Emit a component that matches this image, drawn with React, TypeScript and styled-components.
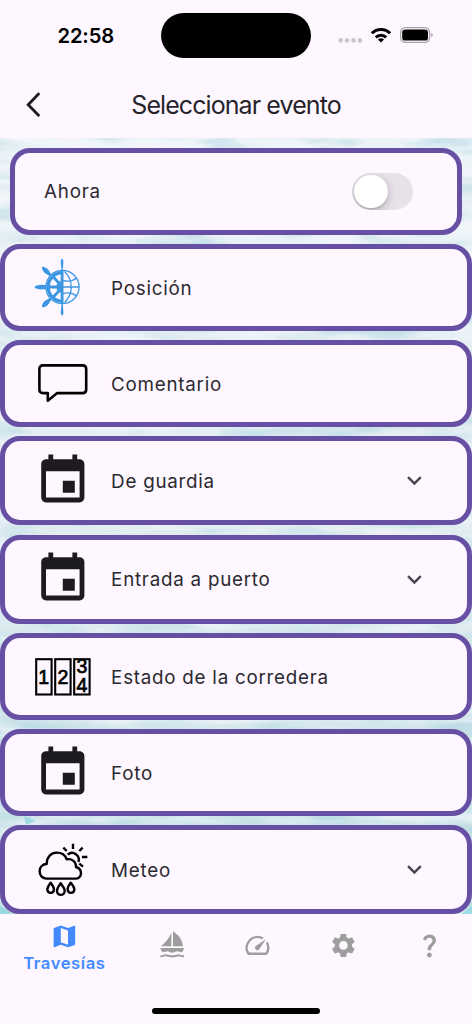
import React from "react";
import styled, { createGlobalStyle } from "styled-components";
import { MdEvent, MdExpandMore, MdMap, MdQuestionMark, MdSettings, MdSpeed } from "react-icons/md";

const GlobalStyle = createGlobalStyle`
  * { box-sizing: border-box; }
  body { margin: 0; background: #fef7ff; font-family: Inter, "Liberation Sans", sans-serif; }
`;

const Screen = styled.div`
  width: 472px;
  height: 1024px;
  display: flex;
  flex-direction: column;
  overflow: hidden;
  background: #fef7ff;
  color: #1d1b20;
`;

const StatusBar = styled.header`
  height: 71px;
  flex: none;
  display: grid;
  grid-template-columns: 161px 150px 161px;
  align-items: center;
`;

const Clock = styled.div`
  padding-left: 57.5px;
  font-size: 20.2px;
  font-weight: 600;
  letter-spacing: -0.15px;
  color: #000;
`;

const Island = styled.div`
  height: 44.5px;
  border-radius: 23px;
  background: #000;
`;

const Indicators = styled.div`
  display: flex;
  align-items: center;
  padding-left: 27px;
`;

const AppBar = styled.div`
  height: 67px;
  flex: none;
  display: grid;
  grid-template-columns: 68px 1fr 68px;
  align-items: center;
  justify-items: center;
`;

const Title = styled.h1`
  margin: 0;
  font-size: 25px;
  line-height: 32px;
  font-weight: 400;
  letter-spacing: -0.92px;
  white-space: nowrap;
  color: #26242a;
`;

const Content = styled.main`
  position: relative;
  height: 775.5px;
  flex: none;
  overflow: hidden;
`;

const Water = styled.svg`
  position: absolute;
  inset: 0;
`;

const List = styled.div`
  position: relative;
  display: flex;
  flex-direction: column;
  gap: 9.6px;
  padding-top: 10px;
`;

const Card = styled.div<{ $inset?: boolean; $tall?: boolean }>`
  flex: none;
  height: ${(p) => (p.$tall ? 88.9 : 86.5)}px;
  margin: 0 ${(p) => (p.$inset ? 9.6 : 0)}px;
  padding-left: ${(p) => (p.$inset ? 29.5 : 28.6)}px;
  padding-right: ${(p) => (p.$inset ? 44 : 38)}px;
  border: 5px solid #6750a4;
  border-radius: 20px;
  background: #fef7ff;
  display: flex;
  align-items: center;
`;

const IconSlot = styled.div`
  width: 58px;
  margin-right: 19.5px;
  flex: none;
  display: flex;
  justify-content: center;
  color: #1d1b20;
`;

const Label = styled.span`
  flex: 1;
  padding-top: 2.4px;
  font-size: 18.8px;
  line-height: 28px;
  letter-spacing: 0.75px;
  white-space: nowrap;
  color: #2b292f;
`;

const Chevron = styled(MdExpandMore)`
  width: 28.8px;
  height: 28.8px;
  color: #49454f;
`;

const Toggle = styled.div`
  width: 61px;
  height: 37.5px;
  padding: 2px;
  border-radius: 19px;
  background: #e8e1ea;
  overflow: hidden;
`;

const Knob = styled.div`
  width: 33.5px;
  height: 33.5px;
  border-radius: 50%;
  background: #fff;
  box-shadow: 0 3px 9px rgba(0, 0, 0, 0.24), 0 2px 1px rgba(0, 0, 0, 0.06);
`;

const NavBar = styled.nav`
  height: 63px;
  flex: none;
  display: flex;
`;

const NavItem = styled.div<{ $active?: boolean }>`
  flex: ${(p) => (p.$active ? 1.5 : 1)};
  display: flex;
  flex-direction: column;
  align-items: center;
  justify-content: ${(p) => (p.$active ? "flex-start" : "center")};
  padding-top: ${(p) => (p.$active ? 8.5 : 0)}px;
  color: ${(p) => (p.$active ? "#448aff" : "#9e9e9e")};
  font-size: 16.6px;
  line-height: 24px;
  font-weight: 600;
  letter-spacing: 0.6px;
`;

const HomeArea = styled.div`
  flex: 1;
  display: flex;
  justify-content: center;
  padding-top: 31.5px;
`;

const HomeBar = styled.div`
  width: 168px;
  height: 6px;
  border-radius: 3px;
  background: #000;
`;

const StatusIcons = () => (
  <svg width="98" height="30" viewBox="338 21 98 30">
    {[340.7, 347.1, 353.5, 359.9].map((x) => (
      <circle key={x} cx={x} cy="40.4" r="2.3" fill="#cbc5ce" />
    ))}
    <g fill="none" stroke="#000" strokeWidth="3">
      <path d="M371.8 33.2a13 13 0 0 1 18.4 0" />
      <path d="M375.8 37.4a7.4 7.4 0 0 1 10.4 0" />
    </g>
    <path d="M377.9 39.6a4.5 4.5 0 0 1 6.2 0L381 42.5z" />
    <rect x="400.6" y="27.6" width="29" height="14.8" rx="4.8" fill="none" stroke="#a7a2a9" strokeWidth="1.2" />
    <rect x="402.2" y="29.4" width="25.8" height="11.2" rx="3.2" />
    <path d="M431.2 32.7c2.2 1 2.2 3.4 0 4.4z" fill="#a7a2a9" />
  </svg>
);

const BackArrow = () => (
  <svg width="16" height="26" viewBox="0.7 0 16 26" fill="none" stroke="#1d1b20" strokeWidth="2.8">
    <path d="M13.2 2.1L2.9 12.7l10.3 10.6" strokeLinecap="round" />
  </svg>
);

const HelmIcon = () => (
  <svg width="58" height="58" viewBox="33.5 258 58 58" fill="none" stroke="#3b97e3" strokeWidth="1.4">
    <circle cx="62" cy="287" r="16.6" strokeWidth="1.3" />
    <path d="M62 272.7a14.3 14.3 0 0 0 0 28.6" strokeWidth="3.2" />
    <path d="M62 281a6 6 0 0 0 0 12z" fill="#3b97e3" strokeWidth="0.5" />
    <path d="M62 287H47M62 287l-10-11M62 287l-10 11M61.6 271v32" strokeWidth="2.8" />
    <path d="M62 287h16.5M64 271.5c9 8.5 9 22.5 0 31M62 280.5c6 1.5 11 0 14-2.5M62 293.5c6-1.5 11 0 14 2.5" strokeWidth="1.3" />
    <g fill="#3b97e3" stroke="none">
      <path d="M61.1 270l-.9-8c.2-2.1.7-3.3 1.5-3.3s1.1 1.200 1.200 3.300l-.6 8zM61.100 304l-.9 8c.2 2.100.7 3.500 1.500 3.500s1.100-1.400 1.200-3.500l-.6-8z" />
      <path d="M46 289.300h-3c-4 .5-8-.5-9.200-2.200 1.200-1.700 5.200-2.700 9.200-2.200h3z" />
      <path d="M49.400 276.200l-2.500-1.800c-3-.9-5.500-4.200-5.500-7.700 3.500-.1 6.800 2.400 7.800 5.400l1.800 2.400z" />
      <path d="M49.400 297.800l-2.500 1.800c-3 .9-5.500 4.200-5.500 7.700 3.500.1 6.800-2.400 7.800-5.400l1.800-2.400z" />
    </g>
  </svg>
);

const CommentIcon = () => (
  <svg width="50" height="38" viewBox="0 0 50 38" fill="none" stroke="#000" strokeWidth="2.6" strokeLinejoin="round">
    <path d="M5 1.400h39.500q3.700 0 3.700 3.700v20.300q0 3.700-3.700 3.700H19.200l-9.400 7.600V29.100H5q-3.600 0-3.600-3.700V5.100q0-3.700 3.600-3.700z" />
  </svg>
);

const Digit = styled.text`
  font-family: "Liberation Sans", Arial, sans-serif;
  font-size: 19.5px;
  font-weight: 400;
  stroke: #000;
  stroke-width: 0.7px;
  text-anchor: middle;
`;

const LogIcon = () => (
  <svg width="56" height="38" viewBox="0 0 56 38">
    <g fill="none" stroke="#000" strokeWidth="2.1">
      <rect x="1.200" y="1.200" width="15.400" height="35.300" />
      <rect x="20.200" y="1.200" width="15.400" height="35.300" />
      <rect x="39.200" y="1.200" width="15.400" height="35.300" />
    </g>
    <Digit x="8.700" y="26">1</Digit>
    <Digit x="28" y="26">2</Digit>
    <Digit x="47" y="15">3</Digit>
    <Digit x="47" y="34">4</Digit>
  </svg>
);

const WeatherIcon = () => (
  <svg width="52" height="55" viewBox="111 128 156 165" fill="none" stroke="#000" strokeWidth="7.200" strokeLinejoin="round">
    <path d="M139 238C125 236 119 226 119 215C119 203 128 194 140 194C140 173 153 160 170 160C185 160 196 168 200 180C216 177 229 188 228 203C238 206 243 213 243 221C243 231 236 238 226 238Z" />
    <path d="M203 166A20 20 0 0 1 235 188" />
    <path d="M219 133v16M190 145l10 10M248 145l-10 10M246 173h16M238 193l11 9" />
    <path d="M152 250C147 257 142 263 142 270C142 284 162 284 162 270C162 263 157 257 152 250ZM182 252C176 260 171 266 171 274C171 291 194 291 194 274C194 266 188 260 182 252ZM212 250C207 257 203 263 203 270C203 284 223 284 223 270C223 263 217 257 212 250Z" />
  </svg>
);

const BoatIcon = () => (
  <svg width="28" height="28.800" viewBox="473 394 84 86.400" fill="currentColor">
    <path d="M513 399v40.500h-31C496 428 507 414 513 399zM518 395c15 9 28 25 30 44.500h-30z" />
    <path d="M480 445h71c-1 6-3 10-7 13-8 0-9-3-14-3s-7 4-14 4-9-4-14-4-6 3-14 3c-4-3-7-7-8-13z" />
    <path d="M480 470q6 0 11-2t13 0 12 2 12-2 12 0 11 2" fill="none" stroke="currentColor" strokeWidth="6" />
  </svg>
);

const Sea = () => (
  <Water width="472" height="776" aria-hidden="true">
    <defs>
      <linearGradient id="sea" x1="0" y1="0" x2="0" y2="1">
        <stop offset="0" stopColor="#edf4f8" />
        <stop offset="0.45" stopColor="#e2edf2" />
        <stop offset="0.8" stopColor="#cfe5ea" />
        <stop offset="1" stopColor="#bcdde2" />
      </linearGradient>
      <filter id="waves" x="0" y="0" width="100%" height="100%" colorInterpolationFilters="sRGB">
        <feTurbulence type="fractalNoise" baseFrequency="0.011 0.07" numOctaves="3" seed="8" />
        <feColorMatrix values="0 0 0 0 0.96  0 0 0 0 0.97  0 0 0 0 0.99  3 0 0 0 -1.2" />
      </filter>
      <filter id="ripples" x="0" y="0" width="100%" height="100%" colorInterpolationFilters="sRGB">
        <feTurbulence type="fractalNoise" baseFrequency="0.014 0.06" numOctaves="3" seed="21" />
        <feColorMatrix values="0 0 0 0 0.7  0 0 0 0 0.84  0 0 0 0 0.88  3 0 0 0 -1.3" />
      </filter>
    </defs>
    <rect width="472" height="776" fill="url(#sea)" />
    <rect width="472" height="776" filter="url(#ripples)" opacity="0.6" />
    <rect width="472" height="776" filter="url(#waves)" opacity="0.65" />
    <path d="M0 776v-8l6 3 5 5zM461 776l11-8v8zM24 678l12 5-10 4z" fill="#86d5df" opacity="0.7" />
  </Water>
);

const CalendarIcon = () => <MdEvent size={57.6} />;

const events: { name: string; icon: React.ReactNode; expandable?: boolean }[] = [
  { name: "Posición", icon: <HelmIcon /> },
  { name: "Comentario", icon: <CommentIcon /> },
  { name: "De guardia", icon: <CalendarIcon />, expandable: true },
  { name: "Entrada a puerto", icon: <CalendarIcon />, expandable: true },
  { name: "Estado de la corredera", icon: <LogIcon /> },
  { name: "Foto", icon: <CalendarIcon /> },
  { name: "Meteo", icon: <WeatherIcon />, expandable: true },
];

export default function App() {
  return (
    <Screen>
      <GlobalStyle />
      <StatusBar>
        <Clock>22:58</Clock>
        <Island />
        <Indicators>
          <StatusIcons />
        </Indicators>
      </StatusBar>
      <AppBar>
        <BackArrow />
        <Title>Seleccionar evento</Title>
      </AppBar>
      <Content>
        <Sea />
        <List>
          <Card $inset>
            <Label>Ahora</Label>
            <Toggle>
              <Knob />
            </Toggle>
          </Card>
          {events.map((e) => (
            <Card key={e.name} $tall={e.expandable}>
              <IconSlot>{e.icon}</IconSlot>
              <Label>{e.name}</Label>
              {e.expandable && <Chevron />}
            </Card>
          ))}
        </List>
      </Content>
      <NavBar>
        <NavItem $active>
          <MdMap size={28.8} />
          Travesías
        </NavItem>
        <NavItem>
          <BoatIcon />
        </NavItem>
        <NavItem>
          <MdSpeed size={28.8} />
        </NavItem>
        <NavItem>
          <MdSettings size={28.8} />
        </NavItem>
        <NavItem>
          <MdQuestionMark size={28.8} />
        </NavItem>
      </NavBar>
      <HomeArea>
        <HomeBar />
      </HomeArea>
    </Screen>
  );
}
